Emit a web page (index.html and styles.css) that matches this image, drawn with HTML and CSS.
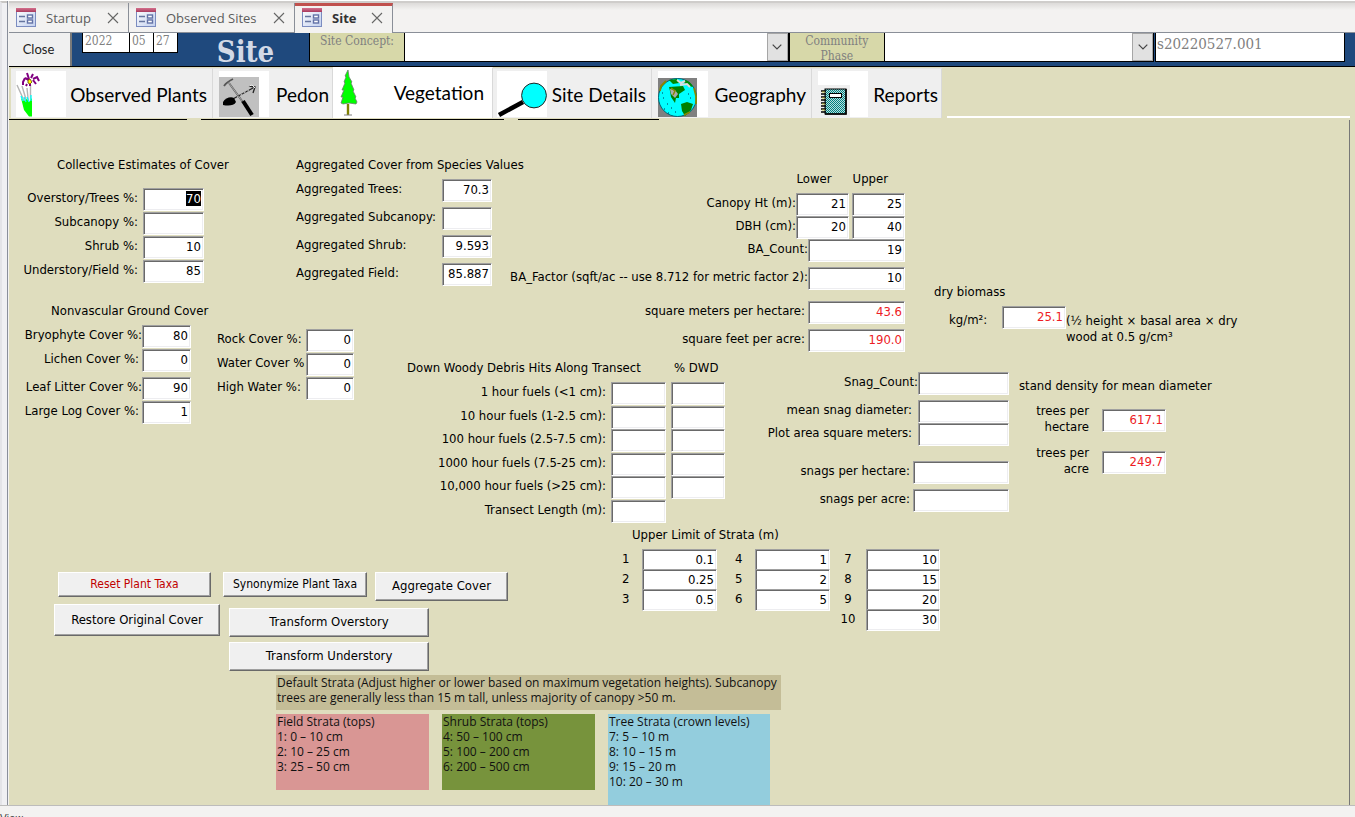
FILE: index.html
```html
<!DOCTYPE html>
<html lang="en">
<head>
<meta charset="utf-8">
<title>Site</title>
<link rel="stylesheet" href="styles.css">
</head>
<body>
<svg class="defs" aria-hidden="true">
  <defs>
    <linearGradient id="fg" x1="0" y1="0" x2="1" y2="1"><stop offset="0" stop-color="#fff"/><stop offset="1" stop-color="#c3d0ee"/></linearGradient>
    <linearGradient id="fr" x1="0" y1="0" x2="0" y2="1"><stop offset="0" stop-color="#d4708c"/><stop offset="1" stop-color="#a83a5e"/></linearGradient>
    <symbol id="form" viewBox="0 0 20 19">
      <rect x=".5" y=".5" width="19" height="18" fill="url(#fg)" stroke="#7b8cc0"/>
      <rect width="20" height="4" fill="url(#fr)"/>
      <path d="M3 8.5h6M3 13.5h6" stroke="#66759f" stroke-width="1.5"/>
      <rect x="11.500" y="7" width="5" height="3" fill="#fff" stroke="#6271a6" stroke-width="1.4"/>
      <rect x="11.500" y="12" width="5" height="3" fill="#fff" stroke="#6271a6" stroke-width="1.4"/>
    </symbol>
    <symbol id="x" viewBox="0 0 12 12"><path d="M1 1l10 10M11 1L1 11" stroke="#666" stroke-width="1.1" fill="none"/></symbol>
    <symbol id="chev" viewBox="0 0 10 6"><path d="M.7.7L5 5 9.300.7" stroke="#444" stroke-width="1.2" fill="none"/></symbol>
    <pattern id="dots" width="2" height="2" patternUnits="userSpaceOnUse"><rect width="2" height="2" fill="#008080"/><path d="M0 0h1v1H0zM1 1h1v1H1z" fill="#b9dede"/></pattern>
  </defs>
</svg>
<div class="work">
  <div class="rail"></div>
  <div class="pane">
    <nav class="tabs" aria-label="Open forms">
      <div class="tab tab-startup"><svg class="ficon"><use href="#form"/></svg><span>Startup</span><button class="x" aria-label="Close Startup"><svg><use href="#x"/></svg></button></div>
      <div class="tab tab-sites"><svg class="ficon"><use href="#form"/></svg><span>Observed Sites</span><button class="x" aria-label="Close Observed Sites"><svg><use href="#x"/></svg></button></div>
      <div class="tab tab-site active"><svg class="ficon"><use href="#form"/></svg><span>Site</span><button class="x" aria-label="Close Site"><svg><use href="#x"/></svg></button></div>
    </nav>
    <header class="head">
      <button class="close">Close</button>
      <div class="date">
        <input class="year" aria-label="Year" value="2022"><input aria-label="Month" value="05"><input aria-label="Day" value="27">
      </div>
      <h1>Site</h1>
      <label class="tag" for="concept">Site Concept:</label>
      <div class="combo combo-a"><select id="concept"><option></option></select><span class="arrow"><svg><use href="#chev"/></svg></span></div>
      <label class="tag" for="phase">Community Phase</label>
      <div class="combo combo-b"><select id="phase"><option></option></select><span class="arrow"><svg><use href="#chev"/></svg></span></div>
      <input class="siteid" aria-label="Site ID" value="s20220527.001">
    </header>
    <nav class="pages" aria-label="Site pages">
      <button class="page p-plants">
        <svg class="pic" viewBox="0 0 50 46"><rect width="50" height="46" fill="#fff"/>
          <path d="M1 14l9 20M6 15l6 20M11 17l2 20M14.500 14v26" stroke="#b5b5b5" stroke-width="1.4" fill="none"/>
          <path d="M5 27l3 3 3-2 2 3 3-4v18.500h-3L8 39z" fill="#0f0"/><path d="M5 25l2 5M8 26l2 5M11 26l2 5M15 24v6" stroke="#0ff" stroke-width="1.3"/>
          <path d="M13 8l-2-6M15 7l2-4M9 7l-2 4v3M9 7l4 2M17 8l4-2 2 4M17 9l3 4M11 13l-1 2M14 13v2" fill="none" stroke="#800080" stroke-width="2"/><path d="M12 9l2-1 2 3-2 2-2-1z" fill="#ff0" stroke="#630" stroke-width=".8"/>
        </svg><span>Observed Plants</span></button>
      <button class="page p-pedon">
        <svg class="pic" viewBox="0 0 50 46"><rect width="50" height="46" fill="#fff"/><rect y="6" width="40" height="40" fill="#c0c0c0"/>
          <path d="M5 15c2-3 5-5 9-7M10 12l16 22" stroke="#555" stroke-width="1.8" fill="none"/><path d="M10 12l16 22" stroke="#ddd" stroke-width=".6"/>
          <path d="M12 29L34 17M30 15l6 1-2 6" stroke="#222" stroke-width="1.3" fill="none"/><path d="M18 26l12-7" stroke="#fff" stroke-dasharray="2 2" stroke-width=".7"/>
          <path d="M4 31c2-4 8-6 11-4l2 4c-2 4-8 4-13 3z" fill="#000"/><path d="M24 30l9 14" stroke="#000" stroke-width="4"/><path d="M30 15l3-1 3 3" stroke="#eee" fill="none"/>
        </svg><span>Pedon</span></button>
      <button class="page p-veg active">
        <svg class="pic" viewBox="0 0 50 46"><path d="M8 0l-3 6 1 1-2 5 1 1-3 7 2 0-3 7 2 0-2 6 2 1 6-1 7 1 1-2-2-4 1-1-3-6 1-1-3-7 1-1-3-5z" fill="#0f0" stroke="#6c7f6c" stroke-width=".8"/><path d="M8 34v11" stroke="#808000" stroke-width="2.400"/><path d="M4 45h8" stroke="#808080"/></svg><span>Vegetation</span></button>
      <button class="page p-details">
        <svg class="pic" viewBox="0 0 50 46"><rect width="50" height="46" fill="#fff"/><path d="M2 44l24-13" stroke="#000" stroke-width="4.500"/><circle cx="37" cy="24.500" r="12.400" fill="#0ff" stroke="#222"/></svg><span>Site Details</span></button>
      <button class="page p-geo">
        <svg class="pic" viewBox="0 0 50 46"><rect width="50" height="46" fill="#fff"/><rect y="7" width="39" height="39" fill="#808080"/><circle cx="19.500" cy="26.500" r="19" fill="#0ff" stroke="#067"/>
          <path d="M11 9l8-1 2 4-6 1zM27 9c4 1 7 4 8 7l-5-1-4-3z" fill="#080"/><path d="M11 16l14-1 2 4-6 4v4l-3 0-1 5-4-6-1-6z" fill="#008000"/><path d="M12 18l5 1 3 4-3 4-4-4z" fill="#aaa"/><path d="M13 17l4 3-2 4" stroke="#880" fill="none" stroke-width="1.5"/>
          <path d="M23 33l6-2 6 2-2 6-6 6-3-5z" fill="#008000"/><path d="M36 17l2 8v8M2 20l1-5 5-5M26 44l6-3" stroke="#880" stroke-width="1.800" fill="none"/><path d="M19 9l4 3 4-2M22 14l7-1 3 3" stroke="#ddd" stroke-width="2" fill="none"/>
          <path d="M5 27h1M9 33h1M6 38h1M13 37h1M17 41h1M10 42h1M32 27h1M30 23h1M4 22h1" stroke="#035"/></svg><span>Geography</span></button>
      <button class="page p-rep">
        <svg class="pic" viewBox="0 0 50 46"><rect width="50" height="46" fill="#fff"/><rect y="14" width="32" height="32" fill="#efefef"/><rect x="7" y="18" width="21" height="25" fill="url(#dots)" stroke="#000"/><path d="M28 18v25H7" fill="none" stroke="#000" stroke-width="1.600"/><rect x="11.500" y="22.500" width="12" height="4" fill="#fff" stroke="#000"/><path d="M3 20h5M3 23h5M3 26h5M3 29h5M3 32h5M3 35h5M3 38h5M3 41h5" stroke="#000" stroke-width="1.400"/><path d="M4 21h3M4 27h3M4 33h3M4 39h3" stroke="#cc3" stroke-width=".8"/></svg><span>Reports</span></button>
      <div class="edge"></div>
    </nav>
    <div class="rules"><i class="rule-a"></i><i class="rule-b"></i><i class="rule-c"></i></div>

    <main class="form">
      <div class="fields">
        <section class="collective">
          <h2>Collective Estimates of Cover</h2>
          <div class="rows">
            <label for="c1">Overstory/Trees %:</label><input id="c1" value="70">
            <label for="c2">Subcanopy %:</label><input id="c2">
            <label for="c3">Shrub %:</label><input id="c3" value="10">
            <label for="c4">Understory/Field %:</label><input id="c4" value="85">
          </div>
        </section>
        <section class="aggregated">
          <h2>Aggregated Cover from Species Values</h2>
          <div class="rows">
            <label for="a1">Aggregated Trees:</label><input id="a1" value="70.3">
            <label for="a2">Aggregated Subcanopy:</label><input id="a2">
            <label for="a3">Aggregated Shrub:</label><input id="a3" value="9.593">
            <label for="a4">Aggregated Field:</label><input id="a4" value="85.887">
          </div>
        </section>
        <section class="canopy">
          <div class="line heads"><span>Lower</span><span>Upper</span></div>
          <div class="line pair"><label for="h1">Canopy Ht (m):</label><input id="h1" value="21"><input aria-label="Canopy height upper" value="25"></div>
          <div class="line pair"><label for="h2">DBH (cm):</label><input id="h2" value="20"><input aria-label="DBH upper" value="40"></div>
          <div class="line"><label for="b1">BA_Count:</label><input id="b1" value="19"></div>
          <div class="line near"><label for="b2">BA_Factor (sqft/ac -- use 8.712 for metric factor 2):</label><input id="b2" value="10"></div>
          <div class="line far"><label class="loose" for="b3">square meters per hectare:</label><input class="calc" id="b3" value="43.6" readonly></div>
          <div class="line near"><label class="loose" for="b4">square feet per acre:</label><input class="calc" id="b4" value="190.0" readonly></div>
        </section>
        <section class="biomass">
          <h2>dry biomass</h2>
          <div class="bio"><label for="kg">kg/m²:</label><input class="calc" id="kg" value="25.1" readonly><p>(½ height × basal area × dry<br>wood at 0.5 g/cm³</p></div>
        </section>
        <section class="ground">
          <div class="ground-a">
            <h2>Nonvascular Ground Cover</h2>
            <div class="rows">
              <label for="g1">Bryophyte Cover %:</label><input id="g1" value="80">
              <label class="loose" for="g2">Lichen Cover %:</label><input id="g2" value="0">
            </div>
            <div class="rows">
              <label for="g3">Leaf Litter Cover %:</label><input id="g3" value="90">
              <label class="loose" for="g4">Large Log Cover %:</label><input id="g4" value="1">
            </div>
          </div>
          <div class="rows ground-b">
            <label for="g5">Rock Cover %:</label><input id="g5" value="0">
            <label for="g6">Water Cover %</label><input id="g6" value="0">
            <label for="g7">High Water %:</label><input id="g7" value="0">
          </div>
        </section>
        <section class="woody">
          <h2 class="span2">Down Woody Debris Hits Along Transect</h2><h2 class="dwd">% DWD</h2>
          <label for="w1">1 hour fuels (&lt;1 cm):</label><input id="w1"><input aria-label="1 hour % DWD">
          <label for="w2">10 hour fuels (1-2.5 cm):</label><input id="w2"><input aria-label="10 hour % DWD">
          <label for="w3">100 hour fuels (2.5-7.5 cm):</label><input id="w3"><input aria-label="100 hour % DWD">
          <label for="w4">1000 hour fuels (7.5-25 cm):</label><input id="w4"><input aria-label="1000 hour % DWD">
          <label for="w5">10,000 hour fuels (&gt;25 cm):</label><input id="w5"><input aria-label="10,000 hour % DWD">
          <label for="w6">Transect Length (m):</label><input id="w6">
        </section>
        <section class="snags">
          <div class="line"><label for="s1">Snag_Count:</label><input id="s1"></div>
          <div class="line near"><label class="wide" for="s2">mean snag diameter:</label><input id="s2"></div>
          <div class="line"><label class="wide" for="s3">Plot area square meters:</label><input id="s3"></div>
          <div class="line rate gap"><label class="loose" for="s4">snags per hectare:</label><input id="s4"></div>
          <div class="line rate near"><label class="loose" for="s5">snags per acre:</label><input id="s5"></div>
        </section>
        <section class="stand">
          <h2>stand density for mean diameter</h2>
          <div class="density"><label for="t1">trees per hectare</label><input class="calc" id="t1" value="617.1" readonly></div>
          <div class="density"><label for="t2">trees per acre</label><input class="calc" id="t2" value="249.7" readonly></div>
        </section>
      </div>

      <div class="lower">
        <div class="actions">
          <div class="act-top">
            <button class="btn small reset">Reset Plant Taxa</button>
            <button class="btn small syn">Synonymize Plant Taxa</button>
            <button class="btn agg">Aggregate Cover</button>
          </div>
          <div class="act-bottom">
            <button class="btn restore">Restore Original Cover</button>
            <div class="stack">
              <button class="btn">Transform Overstory</button>
              <button class="btn">Transform Understory</button>
            </div>
          </div>
        </div>
        <section class="strata">
          <h2>Upper Limit of Strata (m)</h2>
          <div class="strata-cols">
            <div class="limits"><label for="l1">1</label><input id="l1" value="0.1"><label for="l2">2</label><input id="l2" value="0.25"><label for="l3">3</label><input id="l3" value="0.5"></div>
            <div class="limits"><label for="l4">4</label><input id="l4" value="1"><label for="l5">5</label><input id="l5" value="2"><label for="l6">6</label><input id="l6" value="5"></div>
            <div class="limits last"><label for="l7">7</label><input id="l7" value="10"><label for="l8">8</label><input id="l8" value="15"><label for="l9">9</label><input id="l9" value="20"><label for="l10">10</label><input id="l10" value="30"></div>
          </div>
        </section>
      </div>

      <section class="legend">
        <p class="note">Default Strata (Adjust higher or lower based on maximum vegetation heights). Subcanopy<br>trees are generally less than 15 m tall, unless majority of canopy &gt;50 m.</p>
        <div class="keys">
          <p class="key field">Field Strata (tops)<br>1: 0 – 10 cm<br>2: 10 – 25 cm<br>3: 25 – 50 cm</p>
          <p class="key shrub">Shrub Strata (tops)<br>4: 50 – 100 cm<br>5: 100 – 200 cm<br>6: 200 – 500 cm</p>
          <p class="key tree">Tree Strata (crown levels)<br>7: 5 – 10 m<br>8: 10 – 15 m<br>9: 15 – 20 m<br>10: 20 – 30 m</p>
        </div>
      </section>
    </main>
  </div>
</div>
<footer class="status">View</footer>
<script src="app.js"></script>
</body>
</html>
```
FILE: app.js
```js
const first = document.getElementById('c1');
first.focus();
first.select();
```
FILE: styles.css
```css
* { box-sizing: border-box; }
body {
  margin: 0;
  height: 100vh;
  overflow: hidden;
  display: flex;
  flex-direction: column;
  background: #f3f2f1;
  color: #000;
  font: 13px/20px "DejaVu Sans Condensed", "Noto Sans", sans-serif;
}
h1, h2, p { margin: 0; }
h2 { font-size: inherit; font-weight: normal; line-height: 16px; white-space: nowrap; }
button, input, select { font: inherit; color: inherit; margin: 0; border-radius: 0; }
.defs { position: absolute; width: 0; height: 0; }
.work { flex: 1; display: flex; min-height: 0; border-top: 1px solid #fff; }
.rail { width: 7px; border-left: 2px solid #e4e4e8; background: #f0f0f3; border-top: 2px solid #c8c6c4; }
.pane { flex: 1; min-width: 0; display: flex; flex-direction: column; border-left: 1px solid #8a8f9b; padding-left: 1px; }

.tabs {
  display: flex;
  height: 32px;
  border-top: 2px solid #cfcdcb;
  border-bottom: 1px solid #8a8f98;
  background: linear-gradient(#dddbd9, #f3f2f1 7px);
  font: 13px/18px "Open Sans", sans-serif;
  color: #5c5c5c;
}
.tab { display: flex; align-items: center; border-right: 1px solid #8a8f98; padding: 0 8px 1px 7px; height: 30px; }
.tab span { flex: 1; padding-left: 10px; }
.tab-startup { width: 120px; }
.tab-sites { width: 166px; }
.tab-site { width: 98px; }
.tab.active { background: #f3f2f1; color: #333; font-weight: bold; border-top: 3px solid #c0504d; padding-bottom: 4px; }
.ficon { width: 20px; height: 19px; }
.x { border: 0; background: none; padding: 0; width: 14px; height: 14px; display: flex; align-items: center; justify-content: center; }
.x svg { width: 12px; height: 12px; }

.head { display: flex; height: 34px; background: #1f497d; border-bottom: 1px solid #000; font-family: "DejaVu Serif Condensed", serif; color: #808080; }
.close { width: 63px; border: 0; border-right: 2px solid #7a7a7a; background: #f0f0f0; color: #222; font: 13px/18px Lato, sans-serif; padding: 0 2px 1px 0; }
.date { display: flex; padding-left: 10px; }
.date input { width: 24px; height: 20px; border: solid #000; border-width: 0 1px 1px 0; padding: 0 1px 3px 2px; font-size: 12px; line-height: 16px; background: #fff; }
.date .year { width: 48px; border-left: 1px solid #000; }
.head h1 { width: 131px; padding-left: 4px; text-align: center; font: bold 29px/38px "DejaVu Serif Condensed", serif; color: #d3d9e6; }
.tag { width: 96px; height: 29px; border: solid #000; border-width: 0 1px 1px; background: #d7d8a9; text-align: center; font-size: 12px; line-height: 15px; padding-top: 1px; }
.combo { display: flex; height: 29px; border-bottom: 1px solid #000; border-right: 1px solid #000; background: #fff; }
.combo-a { flex: 384; }
.combo-b { flex: 269; }
.combo select { flex: 1; min-width: 0; appearance: none; border: 0; background: #fff; }
.arrow { width: 21px; border: 1px solid #a6a6a6; background: #e1e1e1; display: flex; align-items: center; justify-content: center; }
.arrow svg { width: 10px; height: 6px; }
.siteid { width: 190px; height: 29px; margin: 0 10px 0 1px; border: 1px solid #000; border-top: 0; padding: 0 1px 7px; font-size: 15px; background: #fff; }

.pages { display: flex; align-items: flex-end; height: 52px; padding-left: 2px; background: #dfddbe; font: 19px/26px Lato, sans-serif; }
.page { display: flex; align-items: center; height: 50px; padding: 1px 5px 1px; border: 0; border-top: 1px solid #e4e4e4; border-right: 1px solid #d9d9d9; background: #efefef; font: inherit; white-space: nowrap; }
.page span { flex: 1; text-align: right; padding-top: 2px; }
.pic { width: 50px; height: 46px; flex: none; }
.p-plants { width: 202px; }
.p-pedon { width: 120px; padding-left: 6px; padding-right: 3px; }
.p-veg { width: 160px; padding-left: 7px; padding-right: 8px; }
.p-details { width: 159px; padding-left: 4px; }
.p-geo { width: 160px; padding-left: 6px; }
.p-rep { width: 130px; padding-left: 6px; padding-right: 3px; }
.page.active { background: #fff; border-top-color: #fff; height: 51px; }
.page.active span { padding: 0; }
.edge { flex: 1; height: 2px; margin: 0 5px; background: #fff; }
.rules { display: flex; gap: 14px; height: 2px; padding-top: 1px; background: #dfddbe; }
.rules i { background: #000; }
.rule-a { width: 178px; }
.rule-b { width: 303px; }
.rule-c { width: 141px; }

.form { flex: 1; margin-right: 5px; border-right: 1px solid #777; background: #dfddbe; box-shadow: 5px 0 #dfddbe; padding-top: 37px; }
.form input {
  width: 100%;
  height: 23px;
  padding: 0 2px 3px;
  border: 1px solid;
  border-color: #a0a0a0 #fff #fff #a0a0a0;
  box-shadow: inset 1px 1px #696969, inset -1px -1px #ededf0;
  background: #fff;
  text-align: right;
  outline: 0;
}
.form input::selection { background: #000; color: #fff; }
.form input.calc { color: #ed1c24; }
.form label { white-space: nowrap; }

.fields {
  display: grid;
  grid-template-columns: 287px 111px 103px 230px 194px 85px 1fr;
  grid-template-rows: 146px 57px 165px;
}
.rows { display: grid; align-items: start; }
.collective { grid-area: 1 / 1 / 2 / 2; }
.collective h2 { padding-left: 48px; }
.collective .rows { grid-template-columns: 129px 61px; column-gap: 5px; grid-auto-rows: 24px; padding-top: 15px; text-align: right; }
.aggregated { grid-area: 1 / 2 / 2 / 5; }
.aggregated .rows { grid-template-columns: 146px 50px; grid-auto-rows: 28px; padding-top: 6px; }
.canopy { grid-area: 1 / 4 / 3 / 6; padding: 12px 29px 0 0; }
.line { display: flex; justify-content: flex-end; }
.line input { flex: none; }
.heads { padding-bottom: 4px; gap: 21px; }
.heads span:last-child { padding-right: 17px; }
.canopy .line input { width: 97px; }
.canopy .pair input { width: 53px; }
.pair input + input { margin-left: 3px; }
.near { padding-top: 5px; }
.far { padding-top: 11px; }
.gap { padding-top: 15px; }
.line .loose, .ground .loose { padding-right: 3px; }
.line .wide { padding-right: 6px; }
.biomass { grid-area: 1 / 6 / 3 / 8; padding-top: 127px; }
.bio { display: flex; padding: 6px 0 0 15px; }
.bio label { width: 53px; line-height: 28px; }
.bio input { width: 64px; }
.bio p { line-height: 16px; padding-top: 7px; white-space: nowrap; }
.ground { grid-area: 2 / 1 / 4 / 4; display: flex; gap: 26px; }
.ground h2 { padding-left: 42px; width: 182px; }
.ground-a .rows { grid-template-columns: 133px 49px; grid-auto-rows: 24px; text-align: right; padding-top: 6px; }
.ground-a .rows + .rows { padding-top: 4px; }
.ground-b { grid-template-columns: 89px 48px; grid-auto-rows: 24px; padding-top: 26px; }
.woody { grid-area: 3 / 3 / 4 / 5; display: grid; grid-template-columns: 199px 55px 54px; grid-template-rows: 22px; grid-auto-rows: 24px 23px; column-gap: 5px; align-items: start; text-align: right; }
.span2 { grid-column: span 2; text-align: left; }
.dwd { text-align: left; padding-left: 3px; }
.snags { grid-area: 3 / 4 / 4 / 7; padding: 12px 10px 0 0; }
.snags .line input { width: 91px; }
.snags .rate input { width: 96px; }
.stand { grid-area: 3 / 7 / 4 / 8; padding-top: 18px; }
.stand h2 { padding-bottom: 9px; }
.density { display: flex; align-items: flex-start; padding: 0 0 10px 14px; gap: 13px; }
.form .density label { width: 56px; line-height: 16px; text-align: right; white-space: normal; }
.density input { width: 64px; margin-top: 6px; }

.lower { display: flex; }
.actions { width: 611px; padding: 47px 0 0 45px; }
.act-top { display: flex; align-items: flex-start; padding-left: 4px; height: 32px; }
.act-bottom { display: flex; align-items: flex-start; gap: 9px; }
.stack { display: flex; flex-direction: column; gap: 5px; padding-top: 4px; }
.btn { width: 200px; height: 29px; padding: 0 0 1px; background: #f0f0f0; border: 1px solid; border-color: #fff #696969 #696969 #fff; box-shadow: inset -1px -1px #a0a0a0; line-height: 18px; white-space: nowrap; }
.small { height: 25px; font-size: 12px; }
.reset { width: 153px; margin-right: 12px; color: #c00000; }
.syn { width: 144px; margin-right: 8px; }
.agg { width: 133px; }
.restore { width: 166px; height: 32px; }
.strata h2 { padding-left: 12px; line-height: 20px; }
.strata-cols { display: flex; gap: 16px; padding-top: 4px; }
.limits { display: grid; grid-template-columns: 22px 75px; grid-auto-rows: 20px; align-items: start; }
.limits label { padding-left: 2px; }
.limits input { height: 22px; padding-bottom: 2px; }
.last { grid-template-columns: 26px 74px; margin-left: -6px; }
.limits.last label { padding: 0 10px 0 0; text-align: center; }

.legend { padding: 4px 0 0 267px; font: 12px/15px "Open Sans", sans-serif; color: #111; }
.note { width: 505px; height: 35px; padding: 0 1px; background: #c4bd97; white-space: nowrap; }
.keys { display: flex; align-items: flex-start; gap: 13px; padding-top: 4px; }
.key { width: 153px; min-height: 76px; padding: 0 1px; white-space: nowrap; }
.field { background: #d99694; }
.shrub { background: #77933c; }
.tree { background: #93cddd; width: 162px; min-height: 91px; }
.status { height: 12px; flex: none; border-top: 1px solid #bdbcbb; overflow: hidden; font-size: 11px; line-height: 26px; color: #444; }
```
